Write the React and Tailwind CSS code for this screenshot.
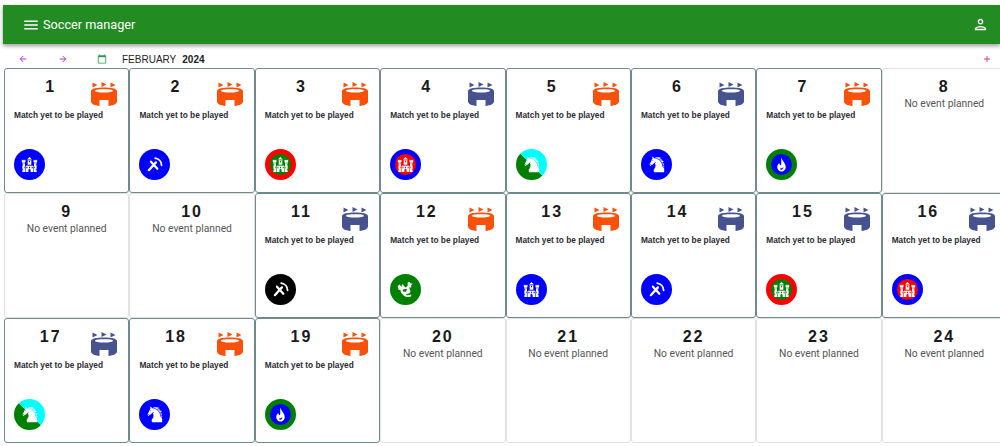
import React from "react";
import { MdMenu, MdOutlinePerson, MdArrowBack, MdArrowForward, MdCalendarToday, MdAdd } from "react-icons/md";
import { GiCastle, GiHorseHead } from "react-icons/gi";

const ORANGE = "text-[#f9500a]";
const NAVY = "text-[#47538f]";

const BLUE = "bg-[#0000ff]";
const RED_RING = "bg-[#008000] border-[5px] border-[#ff0000]";
const BLUE_RING = "bg-[#ff0000] border-[5px] border-[#0000ff]";
const GREEN_RING = "bg-[#0000ff] border-[5px] border-[#008000]";
const SPLIT = "bg-[linear-gradient(45deg,#008000_50%,#00ffff_50%)]";

const StadiumIcon = ({ className }) => (
  <svg width="26" height="24" viewBox="0 0 26 24" fill="currentColor" className={className}>
    <path d="M1.5 0.5 V5.5 L6.5 3Z M10.5 0 V5 L15.5 2.5Z M19.5 0.5 V5.5 L24.5 3Z" />
    <path
      fillRule="evenodd"
      d="M0 9 C0 6.5 6 5.5 13 5.5 C20 5.5 26 6.5 26 9 V19.5 C26 21.8 22.5 23.4 17.5 24 V18 H8.5 V24 C3.5 23.4 0 21.8 0 19.5 Z M4 8.8 C4 10 8 10.6 13 10.6 C18 10.6 22 10 22 8.8 C22 7.6 18 7.2 13 7.2 C8 7.2 4 7.6 4 8.8 Z"
    />
  </svg>
);

// Crossed picks with the curved head up on the right
const PickIcon = ({ size }) => (
  <svg width={size} height={size} viewBox="0 0 24 24" fill="none" stroke="currentColor" strokeLinecap="round">
    <path d="M4 20 L14 9" strokeWidth="3.2" />
    <path d="M7 8 L16 18" strokeWidth="3.2" />
    <path d="M13 3 C18 4 22 8 22 13" strokeWidth="2.6" />
  </svg>
);

const KnightIcon = ({ size }) => <GiHorseHead size={size} className="-scale-x-100" />;

const FlameIcon = ({ size }) => (
  <svg width={size} height={size} viewBox="0 0 24 24" fill="currentColor">
    <path
      fillRule="evenodd"
      d="M12 2 C13 7 18 10 18 15.5 C18 19 15.3 22 12 22 C8.7 22 6 19 6 15.5 C6 13 7.5 11 9 10 C9 12 9.7 13 11 13 C12.5 12 11 6 12 2 Z M11 19.5 C13 19.5 14.8 18 14.5 15.5 C13.5 17 12 17.5 10.5 17.2 C10 18 10.2 19.2 11 19.5 Z"
    />
  </svg>
);

const DragonIcon = ({ size }) => (
  <svg width={size} height={size} viewBox="0 0 24 24" fill="currentColor">
    <path d="M15 2 L18 1 L19 3 L22 4 L20 6 L20 9 L17 9 L19 14 C19 17 16 19 12 18 L14 20 C16 20.5 18 20 20 19 L20 22 C16 23.5 11 22.5 8 19 C6 17 5 15 5 13 L2 12 L1 7 L4 5 L6 8 L8 4 L10 7 L12 9 L15 7 Z" />
    <path d="M8 12 L14 11 L13 15 L9 15 Z" fill="#008000" />
  </svg>
);

// Calendar days that have a match
const matches = {
  1: { stadium: ORANGE, badge: BLUE, icon: GiCastle },
  2: { stadium: ORANGE, badge: BLUE, icon: PickIcon },
  3: { stadium: ORANGE, badge: RED_RING, icon: GiCastle },
  4: { stadium: NAVY, badge: BLUE_RING, icon: GiCastle },
  5: { stadium: ORANGE, badge: SPLIT, icon: KnightIcon },
  6: { stadium: NAVY, badge: BLUE, icon: KnightIcon },
  7: { stadium: ORANGE, badge: GREEN_RING, icon: FlameIcon },
  11: { stadium: NAVY, badge: "bg-black", icon: PickIcon },
  12: { stadium: ORANGE, badge: "bg-[#008000]", icon: DragonIcon },
  13: { stadium: ORANGE, badge: BLUE, icon: GiCastle },
  14: { stadium: NAVY, badge: BLUE, icon: PickIcon },
  15: { stadium: NAVY, badge: RED_RING, icon: GiCastle },
  16: { stadium: NAVY, badge: BLUE_RING, icon: GiCastle },
  17: { stadium: NAVY, badge: SPLIT, icon: KnightIcon },
  18: { stadium: ORANGE, badge: BLUE, icon: KnightIcon },
  19: { stadium: ORANGE, badge: GREEN_RING, icon: FlameIcon },
};

const days = Array.from({ length: 24 }, (_, i) => i + 1);

const DayCell = ({ day }) => {
  const match = matches[day];

  if (!match) {
    return (
      <div className="h-[125px] border border-[#e2e2e2] rounded-[3px] pt-[8px] text-center">
        <div className="text-[16px] leading-[20px] font-bold tracking-[2px] text-[#1a1a1a]">{day}</div>
        <div className="text-[10.3px] leading-[14px] text-[#555] font-['Roboto',sans-serif]">No event planned</div>
      </div>
    );
  }

  const Icon = match.icon;
  return (
    <div className="h-[125px] border border-[#6f8a8a] rounded-[3px] pl-[9px] pr-[10px] pt-[8px] pb-[12px] flex flex-col">
      <div className="flex items-start h-[32px]">
        <div className="flex-1 mr-[4px] text-center text-[16px] leading-[20px] font-bold tracking-[2px] text-[#1a1a1a]">{day}</div>
        <StadiumIcon className={`shrink-0 mt-[5px] mr-[1px] ${match.stadium}`} />
      </div>
      <div className="text-[8.3px] leading-[12px] font-bold text-[#2b2b33] whitespace-nowrap">Match yet to be played</div>
      <div className={`mt-auto w-[31px] h-[31px] rounded-full flex items-center justify-center text-white ${match.badge}`}>
        <Icon size={17} />
      </div>
    </div>
  );
};

export default function App() {
  return (
    <div className="w-[1000px] h-[446px] overflow-hidden bg-white font-['Liberation_Sans',Arial,sans-serif]">
      <header className="ml-[3px] mt-[5px] h-[39px] bg-[#228b22] text-white flex items-center pl-[19px] pr-[11px] shadow-[0_2px_4px_rgba(0,0,0,0.4)]">
        <MdMenu size={18} />
        <span className="ml-[3px] text-[12.7px] font-['Roboto',sans-serif]">Soccer manager</span>
        <MdOutlinePerson size={17} className="ml-auto" />
      </header>

      <nav className="flex items-center h-[24px] pt-[6px] pl-[3px] pr-[8px] text-[#222]">
        <button className="w-[40px] flex justify-center text-[#b43fd6]"><MdArrowBack size={10} /></button>
        <button className="w-[39px] flex justify-center text-[#b43fd6]"><MdArrowForward size={10} /></button>
        <button className="w-[40px] flex justify-center text-[#2f9a55]"><MdCalendarToday size={10} /></button>
        <span className="text-[10px]">FEBRUARY</span>
        <span className="ml-[6px] text-[10px] font-bold">2024</span>
        <MdAdd size={10} className="ml-auto text-[#e8344e]" />
      </nav>

      <div className="ml-[4px] w-[1003px] grid grid-cols-8">
        {days.map((day) => (
          <DayCell key={day} day={day} />
        ))}
      </div>
    </div>
  );
}
